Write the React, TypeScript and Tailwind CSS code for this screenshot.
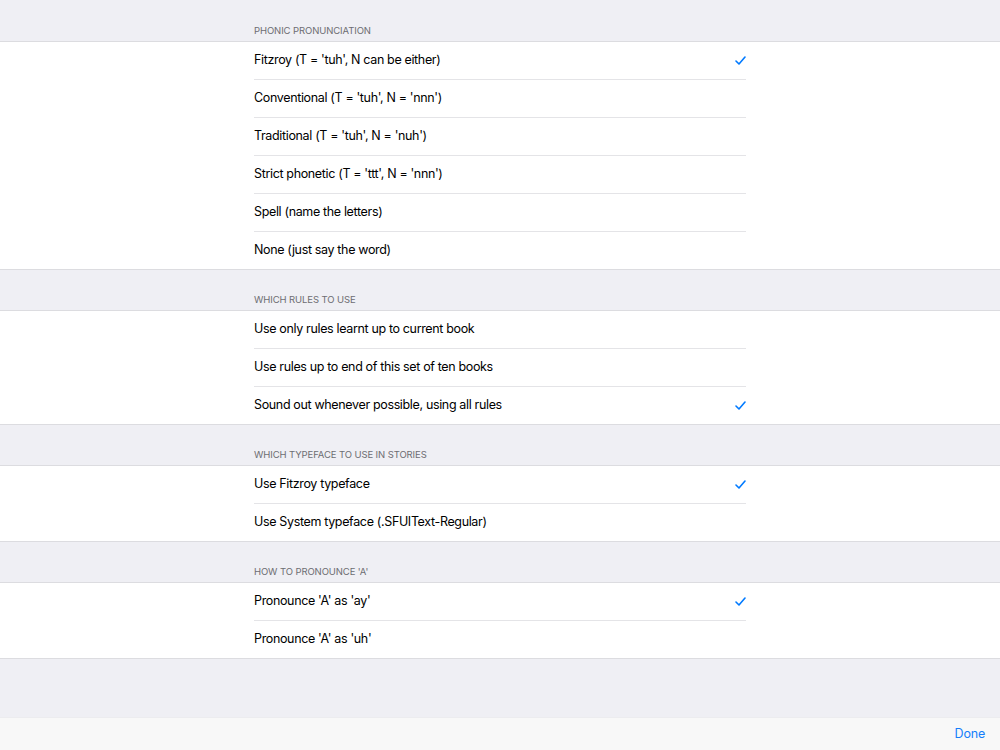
import React from "react";

type Section = { title: string; rows: { label: string; checked?: boolean }[] };

const sections: Section[] = [
  {
    title: "PHONIC PRONUNCIATION",
    rows: [
      { label: "Fitzroy (T = 'tuh', N can be either)", checked: true },
      { label: "Conventional (T = 'tuh', N = 'nnn')" },
      { label: "Traditional (T = 'tuh', N = 'nuh')" },
      { label: "Strict phonetic (T = 'ttt', N = 'nnn')" },
      { label: "Spell (name the letters)" },
      { label: "None (just say the word)" },
    ],
  },
  {
    title: "WHICH RULES TO USE",
    rows: [
      { label: "Use only rules learnt up to current book" },
      { label: "Use rules up to end of this set of ten books" },
      { label: "Sound out whenever possible, using all rules", checked: true },
    ],
  },
  {
    title: "WHICH TYPEFACE TO USE IN STORIES",
    rows: [
      { label: "Use Fitzroy typeface", checked: true },
      { label: "Use System typeface (.SFUIText-Regular)" },
    ],
  },
  {
    title: "HOW TO PRONOUNCE 'A'",
    rows: [
      { label: "Pronounce 'A' as 'ay'", checked: true },
      { label: "Pronounce 'A' as 'uh'" },
    ],
  },
];

function Check() {
  return (
    <svg width="11" height="9" viewBox="0 0 11 9" fill="none">
      <path d="M1 5 L4 8 L10 1" stroke="#007aff" strokeWidth="1.6" strokeLinecap="round" strokeLinejoin="round" />
    </svg>
  );
}

export default function App() {
  return (
    <div
      className="w-[1000px] h-[750px] bg-[#efeff4] flex flex-col overflow-hidden"
      style={{ fontFamily: "Inter, 'Liberation Sans', sans-serif" }}
    >
      <div className="flex-1">
        {sections.map((s, si) => (
          <div key={s.title}>
            <div className={`${si === 0 ? "h-[41px]" : "h-[40px]"} flex items-end justify-center`}>
              <div className="w-[492px] text-[9.5px] tracking-[-0.1px] text-[#6d6d72] pb-[4px] leading-[12px]">
                {s.title}
              </div>
            </div>
            <div className="bg-white border-y border-[#dcdce0]">
              {s.rows.map((r, i) => (
                <div key={r.label} className="flex justify-center">
                  <div
                    className={`w-[492px] flex items-center justify-between ${
                      i === s.rows.length - 1 ? "h-[37px]" : "h-[38px] border-b border-[#e4e4e7]"
                    }`}
                  >
                    <span className="text-[12.5px] tracking-[-0.35px] text-black">{r.label}</span>
                    {r.checked && <Check />}
                  </div>
                </div>
              ))}
            </div>
          </div>
        ))}
      </div>
      <div className="h-[33px] bg-[#f8f8f8] border-t border-[#ececef] flex items-center justify-end pr-[15px]">
        <span className="text-[12.5px] tracking-[-0.2px] text-[#157efb]">Done</span>
      </div>
    </div>
  );
}
